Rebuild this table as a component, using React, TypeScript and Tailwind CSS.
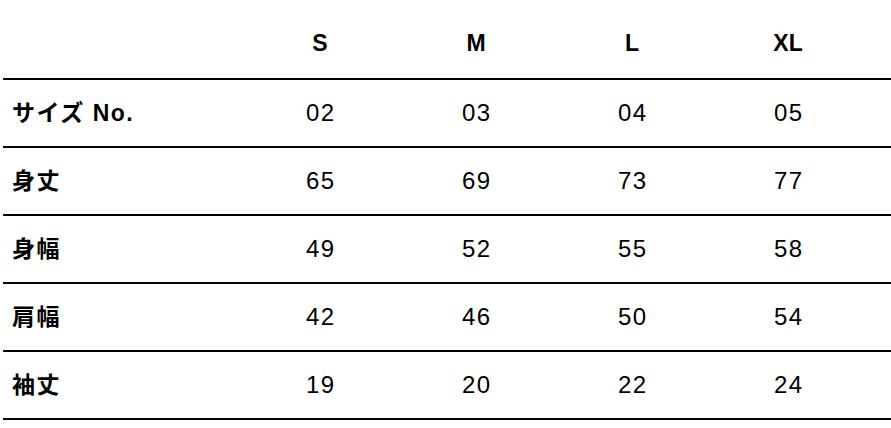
import React from "react";

type Row = {
  label: string;
  values: string[];
};

const sizes = ["S", "M", "L", "XL"];

const rows: Row[] = [
  { label: "サイズ No.", values: ["02", "03", "04", "05"] },
  { label: "身丈", values: ["65", "69", "73", "77"] },
  { label: "身幅", values: ["49", "52", "55", "58"] },
  { label: "肩幅", values: ["42", "46", "50", "54"] },
  { label: "袖丈", values: ["19", "20", "22", "24"] },
];

const cols = "grid grid-cols-[239px_156px_156px_156px_156px_1fr]";

export default function App() {
  return (
    <div
      className="min-h-screen bg-white text-black pl-[3px]"
      style={{ fontFamily: '"Liberation Sans", "Noto Sans CJK JP", sans-serif' }}
    >
      {/* Header */}
      <div className={`${cols} h-[80px] pt-[9px] items-center border-b-2 border-black`}>
        <div />
        {sizes.map((s) => (
          <div key={s} className="text-center text-[23px] leading-none font-bold">
            {s}
          </div>
        ))}
        <div />
      </div>

      {/* Body */}
      {rows.map((r) => (
        <div
          key={r.label}
          className={`${cols} h-[68px] items-center border-b-2 border-black`}
        >
          <div className="pl-[9px] text-[23px] leading-none font-bold tracking-[1.5px]">{r.label}</div>
          {r.values.map((v, i) => (
            <div key={i} className="text-center text-[24px] leading-none tracking-[1.5px] pl-[1.5px]">
              {v}
            </div>
          ))}
          <div />
        </div>
      ))}
    </div>
  );
}
